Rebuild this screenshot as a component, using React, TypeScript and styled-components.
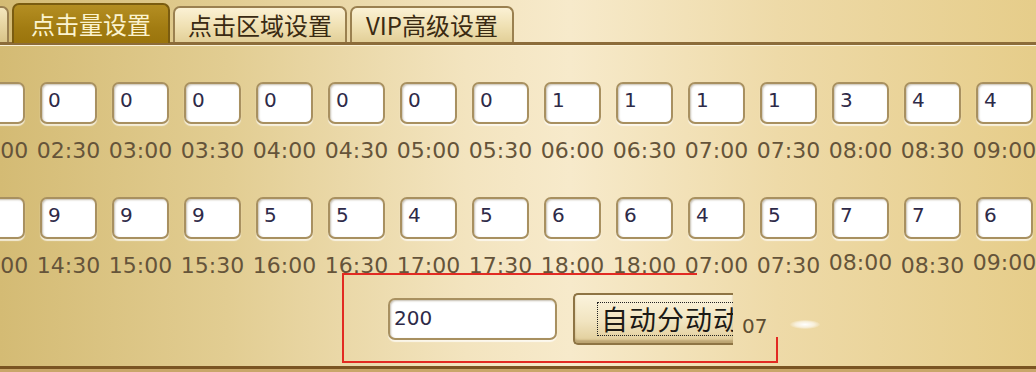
import React from "react";
import styled, { createGlobalStyle } from "styled-components";

const GlobalStyle = createGlobalStyle`
  html, body {
    margin: 0;
    padding: 0;
    overflow: hidden;
  }
`;

const Page = styled.div`
  position: relative;
  width: 1036px;
  height: 372px;
  overflow: hidden;
  display: flex;
  flex-direction: column;
  font-family: "DejaVu Sans", Verdana, sans-serif;
  background: linear-gradient(
    90deg,
    #d4bb74 0%,
    #e2cd92 22%,
    #f3e4bf 45%,
    #f7eacb 55%,
    #eedaa8 75%,
    #e6cd8a 100%
  );
`;

const TabBar = styled.div`
  display: flex;
  align-items: flex-end;
  gap: 3px;
  height: 42px;
  border-bottom: 3px solid #8c6c3a;
  box-shadow: 0 1px 0 #fbf2d6;
`;

const Tab = styled.div<{ $active?: boolean; $width: number }>`
  box-sizing: border-box;
  display: flex;
  align-items: center;
  justify-content: center;
  width: ${(p) => p.$width}px;
  height: ${(p) => (p.$active ? 40 : 36)}px;
  margin-bottom: ${(p) => (p.$active ? -1 : 0)}px;
  border: 2px solid ${(p) => (p.$active ? "#7a5c10" : "#9a8050")};
  border-bottom: none;
  border-radius: 7px 7px 0 0;
  background: ${(p) =>
    p.$active
      ? "linear-gradient(180deg, #b48e22 0%, #a27c12 60%, #9a740c 100%)"
      : "linear-gradient(180deg, #fbf1d4 0%, #efe0b2 55%, #e2cf98 100%)"};
  color: ${(p) => (p.$active ? "#fbf3cf" : "#3a2a12")};
  font-family: "Noto Sans CJK SC", sans-serif;
  font-size: 24px;
  line-height: 1;
  white-space: nowrap;
`;

const TabStub = styled.div`
  box-sizing: border-box;
  width: 9px;
  height: 36px;
  border: 2px solid #9a8050;
  border-left: none;
  border-bottom: none;
  border-radius: 0 7px 0 0;
  background: linear-gradient(180deg, #f4e6bc 0%, #d9c488 100%);
`;

const Blocks = styled.div`
  display: flex;
  flex-direction: column;
  gap: 34px;
  padding-top: 37px;
  margin-left: -32px;
`;

const Block = styled.div`
  display: grid;
  grid-template-columns: repeat(15, 57px);
  column-gap: 15px;
  row-gap: 15px;
`;

const Field = styled.input`
  box-sizing: border-box;
  width: 57px;
  height: 42px;
  padding: 0 0 6px 6px;
  border: 2px solid #a89060;
  border-radius: 7px;
  background: #fff;
  box-shadow: inset 1px 1px 2px rgba(90, 70, 30, 0.35), 0 2px 1px rgba(255, 255, 255, 0.7);
  color: #2e2a48;
  font-family: "DejaVu Sans", Verdana, sans-serif;
  font-size: 20px;
  outline: none;
`;

const Label = styled.div<{ $lift?: number }>`
  justify-self: center;
  white-space: nowrap;
  color: #65543a;
  font-size: 22px;
  line-height: 24px;
  transform: translateY(${(p) => -(p.$lift || 0)}px);
`;

const Controls = styled.div`
  display: flex;
  align-items: center;
  height: 52px;
  margin-top: 15px;
  padding-left: 388px;
`;

const CountInput = styled(Field)`
  width: 169px;
  height: 42px;
  padding: 0 0 2px 4px;
  font-size: 20px;
`;

const Button = styled.button`
  box-sizing: border-box;
  display: flex;
  align-items: center;
  width: 160px;
  height: 52px;
  margin-left: 16px;
  padding: 0 0 0 22px;
  overflow: hidden;
  border: 2px solid #8e7444;
  border-right: none;
  border-radius: 5px 0 0 5px;
  background: linear-gradient(180deg, #fbf3dc 0%, #f1e4c0 55%, #e0cc98 100%);
  box-shadow: inset 0 -3px 2px rgba(120, 90, 40, 0.35);
  cursor: default;
`;

const FocusRing = styled.span`
  padding: 2px 0 2px 3px;
  border: 1px dotted #222;
  border-right: none;
  color: #1c1a16;
  font-family: "Noto Sans CJK SC", sans-serif;
  font-size: 27px;
  letter-spacing: 1px;
  line-height: 28px;
  white-space: nowrap;
`;

const Note = styled.span`
  margin: 14px 0 0 9px;
  color: #5e4e32;
  font-size: 20px;
`;

const Footer = styled.div`
  margin-top: auto;
  height: 3px;
  border-top: 3px solid #7a5422;
  background: #c9a66a;
`;

const Markup = styled.svg`
  position: absolute;
  left: 0;
  top: 0;
  pointer-events: none;
`;

const Glare = styled.div`
  position: absolute;
  left: 790px;
  top: 320px;
  width: 30px;
  height: 9px;
  border-radius: 50%;
  background: radial-gradient(ellipse at center, #fff 0%, rgba(255, 255, 255, 0.6) 45%, rgba(255, 255, 255, 0) 75%);
`;

const times = (start: number) =>
  Array.from({ length: 15 }, (_, i) => {
    const m = start + i * 30;
    return `${String(Math.floor(m / 60)).padStart(2, "0")}:${m % 60 === 0 ? "00" : "30"}`;
  });

const rows = [
  {
    values: ["0", "0", "0", "0", "0", "0", "0", "0", "1", "1", "1", "1", "3", "4", "4"],
    labels: times(120),
    lifts: [] as number[],
  },
  {
    values: ["9", "9", "9", "9", "5", "5", "4", "5", "6", "6", "4", "5", "7", "7", "6"],
    labels: [
      "14:00", "14:30", "15:00", "15:30", "16:00", "16:30", "17:00", "17:30",
      "18:00", "18:00", "07:00", "07:30", "08:00", "08:30", "09:00",
    ],
    lifts: [0, 0, 0, 0, 0, 0, 0, 0, 0, 0, 0, 0, 3, 0, 3],
  },
];

export default function App() {
  return (
    <Page>
      <GlobalStyle />
      <TabBar>
        <TabStub />
        <Tab $active $width={158}>点击量设置</Tab>
        <Tab $width={174}>点击区域设置</Tab>
        <Tab $width={164}>VIP高级设置</Tab>
      </TabBar>
      <Blocks>
        {rows.map((row, r) => (
          <Block key={r}>
            {row.values.map((v, i) => (
              <Field key={`v${i}`} value={v} readOnly />
            ))}
            {row.labels.map((t, i) => (
              <Label key={`l${i}`} $lift={row.lifts[i]}>
                {t}
              </Label>
            ))}
          </Block>
        ))}
      </Blocks>
      <Controls>
        <CountInput value="200" readOnly />
        <Button>
          <FocusRing>自动分动动</FocusRing>
        </Button>
        <Note>07</Note>
      </Controls>
      <Footer />
      <Glare />
      <Markup width="1036" height="372">
        <polyline
          points="697,274 343,274 343,362 777,362 777,337"
          fill="none"
          stroke="#e22a22"
          strokeWidth="2"
        />
      </Markup>
    </Page>
  );
}
